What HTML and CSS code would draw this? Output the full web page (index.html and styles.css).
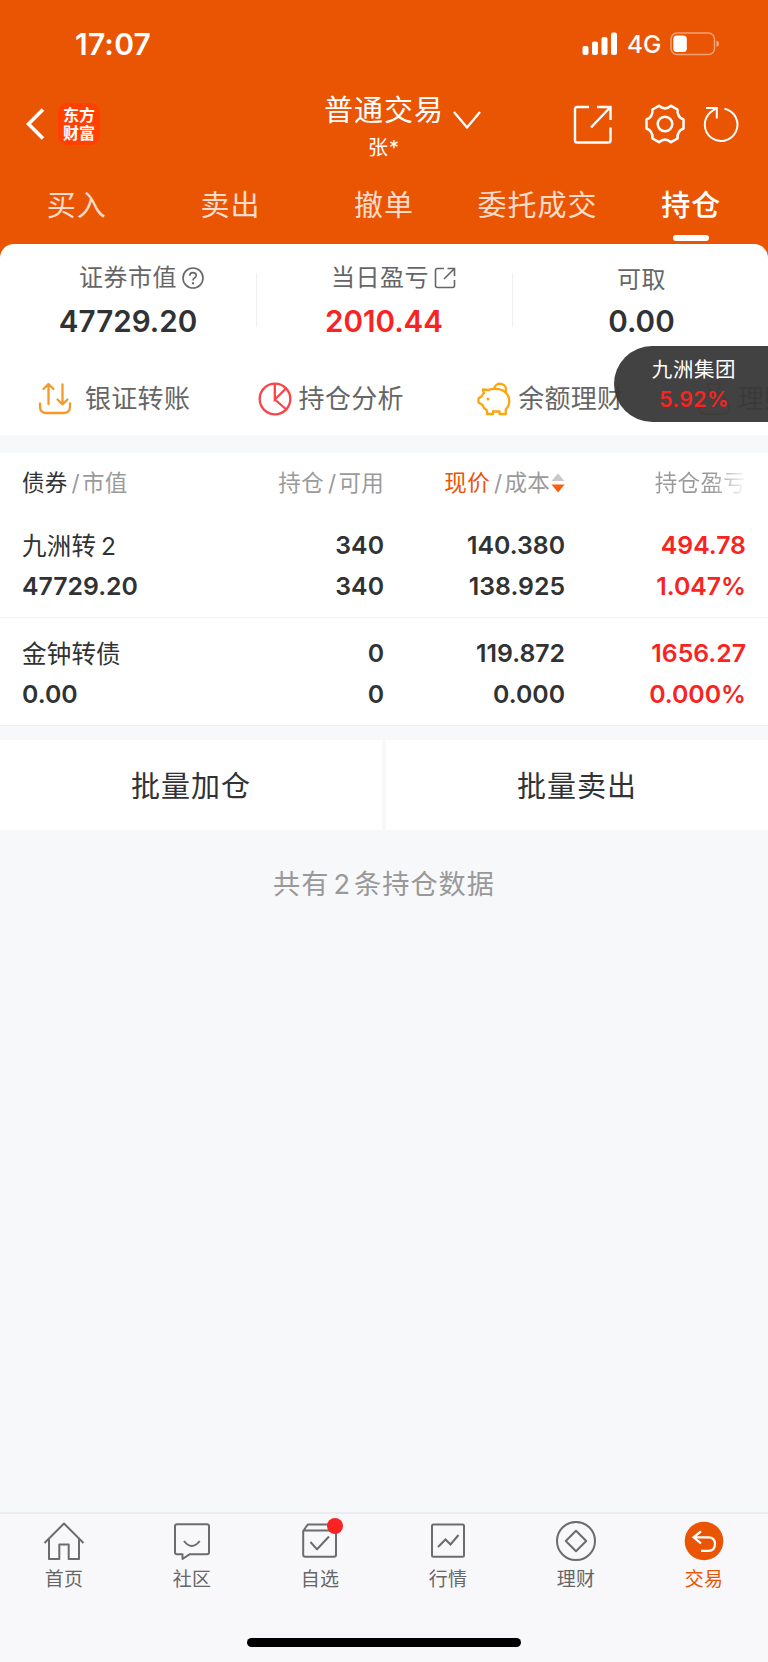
FILE: index.html
```html
<!DOCTYPE html>
<html lang="zh-CN">
<head>
    <meta charset="UTF-8">
    <meta name="viewport" content="width=device-width, initial-scale=1">
    <title>普通交易 - 持仓</title>
    <link rel="stylesheet" href="styles.css">
</head>
<body>
<div class="root">

    <div class="header">
        <div class="status-bar">
            <span class="time">17:07</span>
            <div class="status-icons">
                <svg class="signal" width="36" height="24" viewBox="0 0 36 24" fill="#fff">
                    <rect x="0.5" y="14" width="6" height="9" rx="2"/>
                    <rect x="10" y="9.500" width="6" height="13.500" rx="2"/>
                    <rect x="19.500" y="5" width="6" height="18" rx="2"/>
                    <rect x="29" y="0.5" width="6" height="22.500" rx="2"/>
                </svg>
                <span class="network">4G</span>
                <svg class="battery" width="50" height="24" viewBox="0 0 50 24">
                    <rect x="1" y="1" width="43.500" height="21.500" rx="6" fill="none" stroke="#fff" stroke-opacity=".45" stroke-width="1.500"/>
                    <rect x="3.300" y="3.500" width="13.500" height="16.500" rx="3.500" fill="#fff"/>
                    <path d="M46.500 8.500q2.500 1 2.500 3.300t-2.500 3.300z" fill="#fff" fill-opacity=".5"/>
                </svg>
            </div>
        </div>

        <div class="navbar">
            <div class="nav-left">
                <svg width="20" height="32" viewBox="0 0 20 32" fill="none" stroke="#fff" stroke-width="3.600">
                    <path d="M17 1.500L2.500 16 17 30.500"/>
                </svg>
                <div class="app-logo">东方<br>财富</div>
            </div>
            <div class="nav-title">
                <div class="title">普通交易</div>
                <div class="account">张*</div>
            </div>
            <svg class="chevron" width="28" height="20" viewBox="0 0 28 20" fill="none" stroke="#fff" stroke-width="2.400">
                <path d="M1 2l13 15.500L27 2"/>
            </svg>
            <div class="nav-actions">
                <svg class="i-share" width="40" height="40" viewBox="0 0 40 40" fill="none" stroke="#fff" stroke-width="2.400">
                    <path d="M16 2H4Q2 2 2 4v31.500q0 2 2 2h31.500q2 0 2-2V22.500M24 2h13.500v13M37.500 2L18 22.500"/>
                </svg>
                <svg class="i-gear" width="40" height="40" viewBox="0 0 40 40" fill="none" stroke="#fff" stroke-width="2.500" stroke-linejoin="round">
                    <path d="M14 1.800Q20 7 26 1.800L32.500 5.500Q32 13 38.500 15.500V24.500Q32 27 32.500 34.500L26 38.200Q20 33 14 38.200L7.500 34.500Q8 27 1.500 24.500V15.500Q8 13 7.500 5.500Z"/>
                    <circle cx="20" cy="20" r="7.300"/>
                </svg>
                <svg class="i-refresh" width="36" height="36" viewBox="0 0 36 36" fill="none" stroke="#fff" stroke-width="2">
                    <path d="M21.500 2.700A16.300 16.300 0 1 1 7.500 6.300L13.500 2M3 2h10.800v10.500"/>
                </svg>
            </div>
        </div>

        <div class="tabs">
            <div class="tab">买入</div>
            <div class="tab">卖出</div>
            <div class="tab">撤单</div>
            <div class="tab">委托成交</div>
            <div class="tab active">持仓</div>
        </div>
    </div>

    <div class="summary">
        <div class="stats">
            <div class="stat">
                <div class="stat-label with-help">证券市值
                    <svg width="22" height="22" viewBox="0 0 22 22" fill="none" stroke="#666" stroke-width="1.600">
                        <circle cx="11" cy="11" r="10"/>
                        <path d="M7.800 8.800q0-3.200 3.200-3.200t3.200 2.900q0 1.500-1.700 2.500T11 13.500"/>
                        <path d="M11 15.300v1.900" stroke-width="2"/>
                    </svg>
                </div>
                <div class="stat-value">47729.20</div>
            </div>
            <div class="stat">
                <div class="stat-label with-link">当日盈亏
                    <svg width="22" height="22" viewBox="0 0 22 22" fill="none" stroke="#666" stroke-width="1.600">
                        <path d="M10 1.500H3.500q-2 0-2 2v15q0 2 2 2h15q2 0 2-2V13M13.500 1.500h7V9M20.500 1.500L10 12"/>
                    </svg>
                </div>
                <div class="stat-value red">2010.44</div>
            </div>
            <div class="stat">
                <div class="stat-label plain">可取</div>
                <div class="stat-value">0.00</div>
            </div>
        </div>

        <div class="shortcuts">
            <div class="shortcut wide">
                <svg width="34" height="34" viewBox="0 0 34 34" fill="none" stroke="#f39a2b" stroke-width="2.300" stroke-linecap="round" stroke-linejoin="round">
                    <path d="M2 21.500v3q0 6.500 6.500 6.500h17q6.500 0 6.500-6.500v-3M10.500 22V2.500M5.500 7l5-4.800 5 4.800M24.500 2.500V22M19.500 17.500l5 4.800 5-4.800"/>
                </svg>
                <span>银证转账</span>
            </div>
            <div class="shortcut">
                <svg width="34" height="34" viewBox="0 0 34 34" fill="none" stroke="#fb4348" stroke-width="2.300">
                    <circle cx="17" cy="17" r="15.300"/>
                    <path d="M16.800 2v15.500L28 6.500M16.800 17.500L29 28"/>
                </svg>
                <span>持仓分析</span>
            </div>
            <div class="shortcut">
                <svg width="34" height="34" viewBox="0 0 34 34" fill="none" stroke="#fca50d" stroke-width="2.300" stroke-linejoin="round">
                    <path d="M5.800 7.500L11.500 8Q14 6.800 18 6.800C27 6.800 32.300 12 32.300 19Q32.300 24 28.800 27.500V32H22.500V29.500H16V32H10V28.500Q6.500 26.500 5.500 23L1.500 20.500V16.500L5 14Q5.500 12.500 7 11.200Z"/>
                    <path d="M17.300 6.500C18 0 29 0 29 7.800Q29 9.500 28 11"/>
                    <circle cx="11" cy="17" r="1.500" fill="#fca50d" stroke="none"/>
                </svg>
                <span>余额理财</span>
            </div>
            <div class="shortcut">
                <svg width="34" height="34" viewBox="0 0 34 34" fill="none" stroke="#f39a2b" stroke-width="2.200">
                    <path d="M10 2h14l-4 8h-6zM14 10Q2 17 2 26q0 6 6 6h18q6 0 6-6 0-9-12-16"/>
                </svg>
                <span>理财</span>
            </div>
        </div>

        <div class="float-pill">
            <div class="pill-name">九洲集团</div>
            <div class="pill-rate">5.92%</div>
        </div>
    </div>

    <div class="positions">
        <div class="row row-head">
            <div><span class="dark">债券</span><i>/</i>市值</div>
            <div>持仓<i>/</i>可用</div>
            <div class="sorted"><span class="orange">现价</span><i>/</i>成本<svg width="14" height="20" viewBox="0 0 14 20">
                    <path d="M0.500 8L7 0.500 13.500 8z" fill="#c8c8c8"/>
                    <path d="M0.500 11.500L7 19.500l6.500-8z" fill="#fd5c0d"/>
                </svg>
            </div>
            <div class="faded">持仓盈亏</div>
        </div>
        <div class="row">
            <div><p class="name">九洲转<span class="num">2</span></p><p>47729.20</p></div>
            <div><p>340</p><p>340</p></div>
            <div><p>140.380</p><p>138.925</p></div>
            <div class="red"><p>494.78</p><p>1.047%</p></div>
        </div>
        <div class="row">
            <div><p class="name">金钟转债</p><p>0.00</p></div>
            <div><p>0</p><p>0</p></div>
            <div><p>119.872</p><p>0.000</p></div>
            <div class="red"><p>1656.27</p><p>0.000%</p></div>
        </div>
    </div>

    <div class="batch">
        <div class="batch-btn">批量加仓</div>
        <div class="batch-btn">批量卖出</div>
    </div>

    <div class="total">共有<span class="num">2</span>条持仓数据</div>

    <div class="footer">
        <div class="menu">
            <div class="menu-item">
                <svg width="42" height="42" viewBox="0 0 42 42" fill="none" stroke="#6c6c6e" stroke-width="2" stroke-linejoin="round">
                    <path d="M1.500 22L21 2.500 40.500 22M6 18v20h10.300V23.500h9.400V38H36V18"/>
                </svg>
                <span>首页</span>
            </div>
            <div class="menu-item">
                <svg width="42" height="42" viewBox="0 0 42 42" fill="none" stroke="#6c6c6e" stroke-width="2" stroke-linejoin="round">
                    <path d="M6 3.300h30q2 0 2 2v26q0 2-2 2H18.500L11.500 38v-4.700H6q-2 0-2-2v-26q0-2 2-2z"/>
                    <path d="M13 20q7.800 10 15.700 0"/>
                </svg>
                <span>社区</span>
            </div>
            <div class="menu-item">
                <svg width="42" height="42" viewBox="0 0 42 42" fill="none" stroke="#6c6c6e" stroke-width="2" stroke-linejoin="round">
                    <path d="M4.200 10L8.800 3.500h23L37 9.500v24.300q0 2-2 2H6.200q-2 0-2-2zM4.200 9.500H37M11.500 21l6.500 7.300 12-12.800"/>
                </svg>
                <i class="dot"></i>
                <span>自选</span>
            </div>
            <div class="menu-item">
                <svg width="42" height="42" viewBox="0 0 42 42" fill="none" stroke="#6c6c6e" stroke-width="2">
                    <rect x="5" y="3.500" width="32" height="32.300" rx="1.500"/>
                    <path d="M11 26l7.500-7.500 5 5L31.500 14"/>
                </svg>
                <span>行情</span>
            </div>
            <div class="menu-item">
                <svg width="42" height="42" viewBox="0 0 42 42" fill="none" stroke="#6c6c6e" stroke-width="2" stroke-linejoin="round">
                    <circle cx="21" cy="20" r="19"/>
                    <path d="M21 9.800L31.200 20 21 30.200 10.800 20z"/>
                </svg>
                <span>理财</span>
            </div>
            <div class="menu-item active">
                <svg width="42" height="42" viewBox="0 0 42 42" fill="none" stroke="#fff" stroke-width="2.200">
                    <circle cx="21" cy="20" r="19.300" fill="#ea5504" stroke="none"/>
                    <path d="M18 10.300L10.500 16.300 18 22.300M11 16.300h14.500q6.500 0 6.500 6.800t-6.500 6.800h-7.500"/>
                </svg>
                <span>交易</span>
            </div>
        </div>
        <div class="home-bar"></div>
    </div>

</div>
</body>
</html>
```

FILE: styles.css
```css
* {
    box-sizing: border-box;
}

body {
    margin: 0;
    padding: 0;
    font-family: Inter, "Noto Sans CJK SC", sans-serif;
    color: #303233;
    background: #f7f8fa;
}

p {
    margin: 0;
}

i {
    font-style: normal;
}

svg {
    display: block;
    flex: none;
}

.root {
    display: flex;
    flex-direction: column;
    width: 768px;
    height: 1662px;
    overflow: hidden;
}

.red {
    color: #f92321;
}

/* header */
.header {
    height: 258px;
    flex: none;
    background: #ea5504;
    color: #fff;
}

.status-bar {
    display: flex;
    justify-content: space-between;
    height: 88px;
    padding: 0 48px 0 75px;
    line-height: 88px;
}

.time {
    font-size: 30px;
    font-weight: 600;
    letter-spacing: 0.2px;
}

.status-icons {
    display: flex;
    align-items: center;
}

.network {
    width: 34px;
    margin: 0 9px;
    font-size: 24.5px;
    font-weight: 500;
}

.navbar {
    display: flex;
    height: 76px;
    padding: 3px 29px 0 26px;
}

.nav-left {
    display: flex;
    align-items: center;
    width: 298px;
    height: 66px;
}

.app-logo {
    width: 42px;
    height: 42px;
    margin-left: 12px;
    padding-top: 3px;
    border-radius: 9px;
    background: #ff4000;
    font-size: 16px;
    font-weight: 700;
    line-height: 18px;
    text-align: center;
}

.nav-title {
    width: 120px;
    text-align: center;
    white-space: nowrap;
}

.title {
    font-size: 29px;
    line-height: 39px;
    letter-spacing: 1px;
}

.account {
    font-size: 20px;
    line-height: 36px;
    letter-spacing: 1px;
}

.chevron {
    margin: 19px 0 0 9px;
}

.nav-actions {
    display: flex;
    align-items: center;
    height: 66px;
    margin-left: auto;
}

.i-share {
    margin-top: 2px;
}

.i-gear {
    margin-left: 32px;
}

.i-refresh {
    margin-left: 18px;
}

.tabs {
    display: grid;
    grid-template-columns: repeat(5, 1fr);
}

.tab {
    position: relative;
    height: 80px;
    line-height: 83px;
    font-size: 29px;
    letter-spacing: 1px;
    text-align: center;
    color: #fcdccb;
}

.tab.active {
    color: #fff;
    font-weight: 500;
}

.tab.active::after {
    content: "";
    position: absolute;
    left: 59px;
    bottom: 3px;
    width: 36px;
    height: 6px;
    border-radius: 3px;
    background: #fff;
}

/* summary card */
.summary {
    position: relative;
    flex: none;
    height: 191px;
    margin-top: -14px;
    border-radius: 14px 14px 0 0;
    background: #fff;
}

.stats {
    display: grid;
    grid-template-columns: repeat(3, 1fr);
    padding-top: 16px;
}

.stat + .stat {
    background: linear-gradient(#f0f0f2, #f0f0f2) no-repeat 0 13px / 1px 54px;
}

.stat:last-child {
    padding-left: 3px;
}

.stat-label {
    display: flex;
    align-items: center;
    justify-content: center;
    height: 36px;
    line-height: 36px;
    font-size: 24px;
    letter-spacing: 0.5px;
    color: #666;
}

.stat-label svg {
    margin-left: 5px;
}

.with-help {
    padding-left: 27px;
}

.with-link {
    padding-left: 19px;
}

.plain {
    padding-top: 4px;
}

.stat-value {
    height: 50px;
    line-height: 51px;
    font-size: 29.6px;
    font-weight: 600;
    text-align: center;
}

.shortcuts {
    display: grid;
    grid-template-columns: repeat(4, 219.6px);
    height: 89px;
    padding: 21px 0 0 38px;
    overflow: hidden;
}

.shortcut {
    display: flex;
    align-items: center;
    height: 64px;
    line-height: 64px;
    font-size: 26px;
    letter-spacing: 0.3px;
    color: #666;
}

.shortcut span {
    margin-left: 7px;
}

.shortcut.wide span {
    margin-left: 13px;
}

.float-pill {
    position: absolute;
    top: 102px;
    right: 0;
    width: 154px;
    height: 76px;
    padding: 9px 0 0 6px;
    border-radius: 38px 0 0 38px;
    background: rgba(56, 56, 56, .95);
    color: #fff;
    text-align: center;
}

.pill-name {
    font-size: 20.5px;
    line-height: 30px;
    letter-spacing: 0.6px;
}

.pill-rate {
    font-size: 21.5px;
    font-weight: 600;
    line-height: 29px;
    color: #f92321;
    letter-spacing: 0.3px;
}

/* positions table */
.positions {
    flex: none;
    margin-top: 18px;
    background: #fff;
}

.row {
    display: grid;
    grid-template-columns: repeat(4, 1fr);
    height: 108px;
    padding: 15px 22px 0;
    border-bottom: 1px solid #eff0f2;
    font-size: 24.8px;
    font-weight: 600;
    line-height: 41px;
    text-align: right;
}

.row > :first-child {
    text-align: left;
}

.row-head {
    height: 57px;
    padding-top: 0;
    border: 0;
    font-size: 22.5px;
    font-weight: 400;
    line-height: 59px;
    color: #9a9a9a;
    letter-spacing: 0.3px;
    white-space: nowrap;
}

.row-head i {
    margin: 0 2px 0 4px;
}

.dark {
    color: #303233;
}

.orange {
    color: #ea5504;
}

.sorted {
    display: flex;
    justify-content: flex-end;
    align-items: center;
}

.sorted svg {
    margin-left: 1px;
}

.faded {
    background: linear-gradient(90deg, #9a9a9a 148px, #fff 183px);
    background-clip: text;
    -webkit-background-clip: text;
    color: transparent;
}

.name {
    font-weight: 400;
    font-size: 24.5px;
    line-height: 42px;
    margin-bottom: -1px;
    letter-spacing: 0.2px;
}

.name .num {
    margin-left: 5px;
}

/* batch buttons */
.batch {
    display: grid;
    grid-template-columns: 1fr 1fr;
    gap: 4px;
    flex: none;
    margin-top: 14px;
}

.batch-btn {
    height: 90px;
    line-height: 94px;
    background: #fff;
    font-size: 29px;
    letter-spacing: 1px;
    text-align: center;
}

.total {
    margin-top: 35px;
    font-size: 27.2px;
    line-height: 40px;
    letter-spacing: 1px;
    text-align: center;
    color: #999;
}

.total .num {
    margin: 0 3px 0 4px;
}

/* bottom menu */
.footer {
    margin-top: auto;
    height: 150px;
    flex: none;
    border-top: 2px solid #ebecee;
    background: #f8f8fb;
}

.menu {
    display: grid;
    grid-template-columns: repeat(6, 1fr);
    height: 124px;
    padding-top: 7px;
}

.menu-item {
    position: relative;
    display: flex;
    flex-direction: column;
    align-items: center;
    font-size: 19px;
    line-height: 30px;
    letter-spacing: 0.3px;
    color: #666;
}

.menu-item span {
    margin-top: 2px;
}

.menu-item.active {
    color: #ea5504;
}

.dot {
    position: absolute;
    top: -3px;
    left: 71px;
    width: 16px;
    height: 16px;
    border-radius: 50%;
    background: #f92321;
}

.home-bar {
    width: 274px;
    height: 9px;
    margin: 0 auto;
    border-radius: 5px;
    background: #000;
}
```
